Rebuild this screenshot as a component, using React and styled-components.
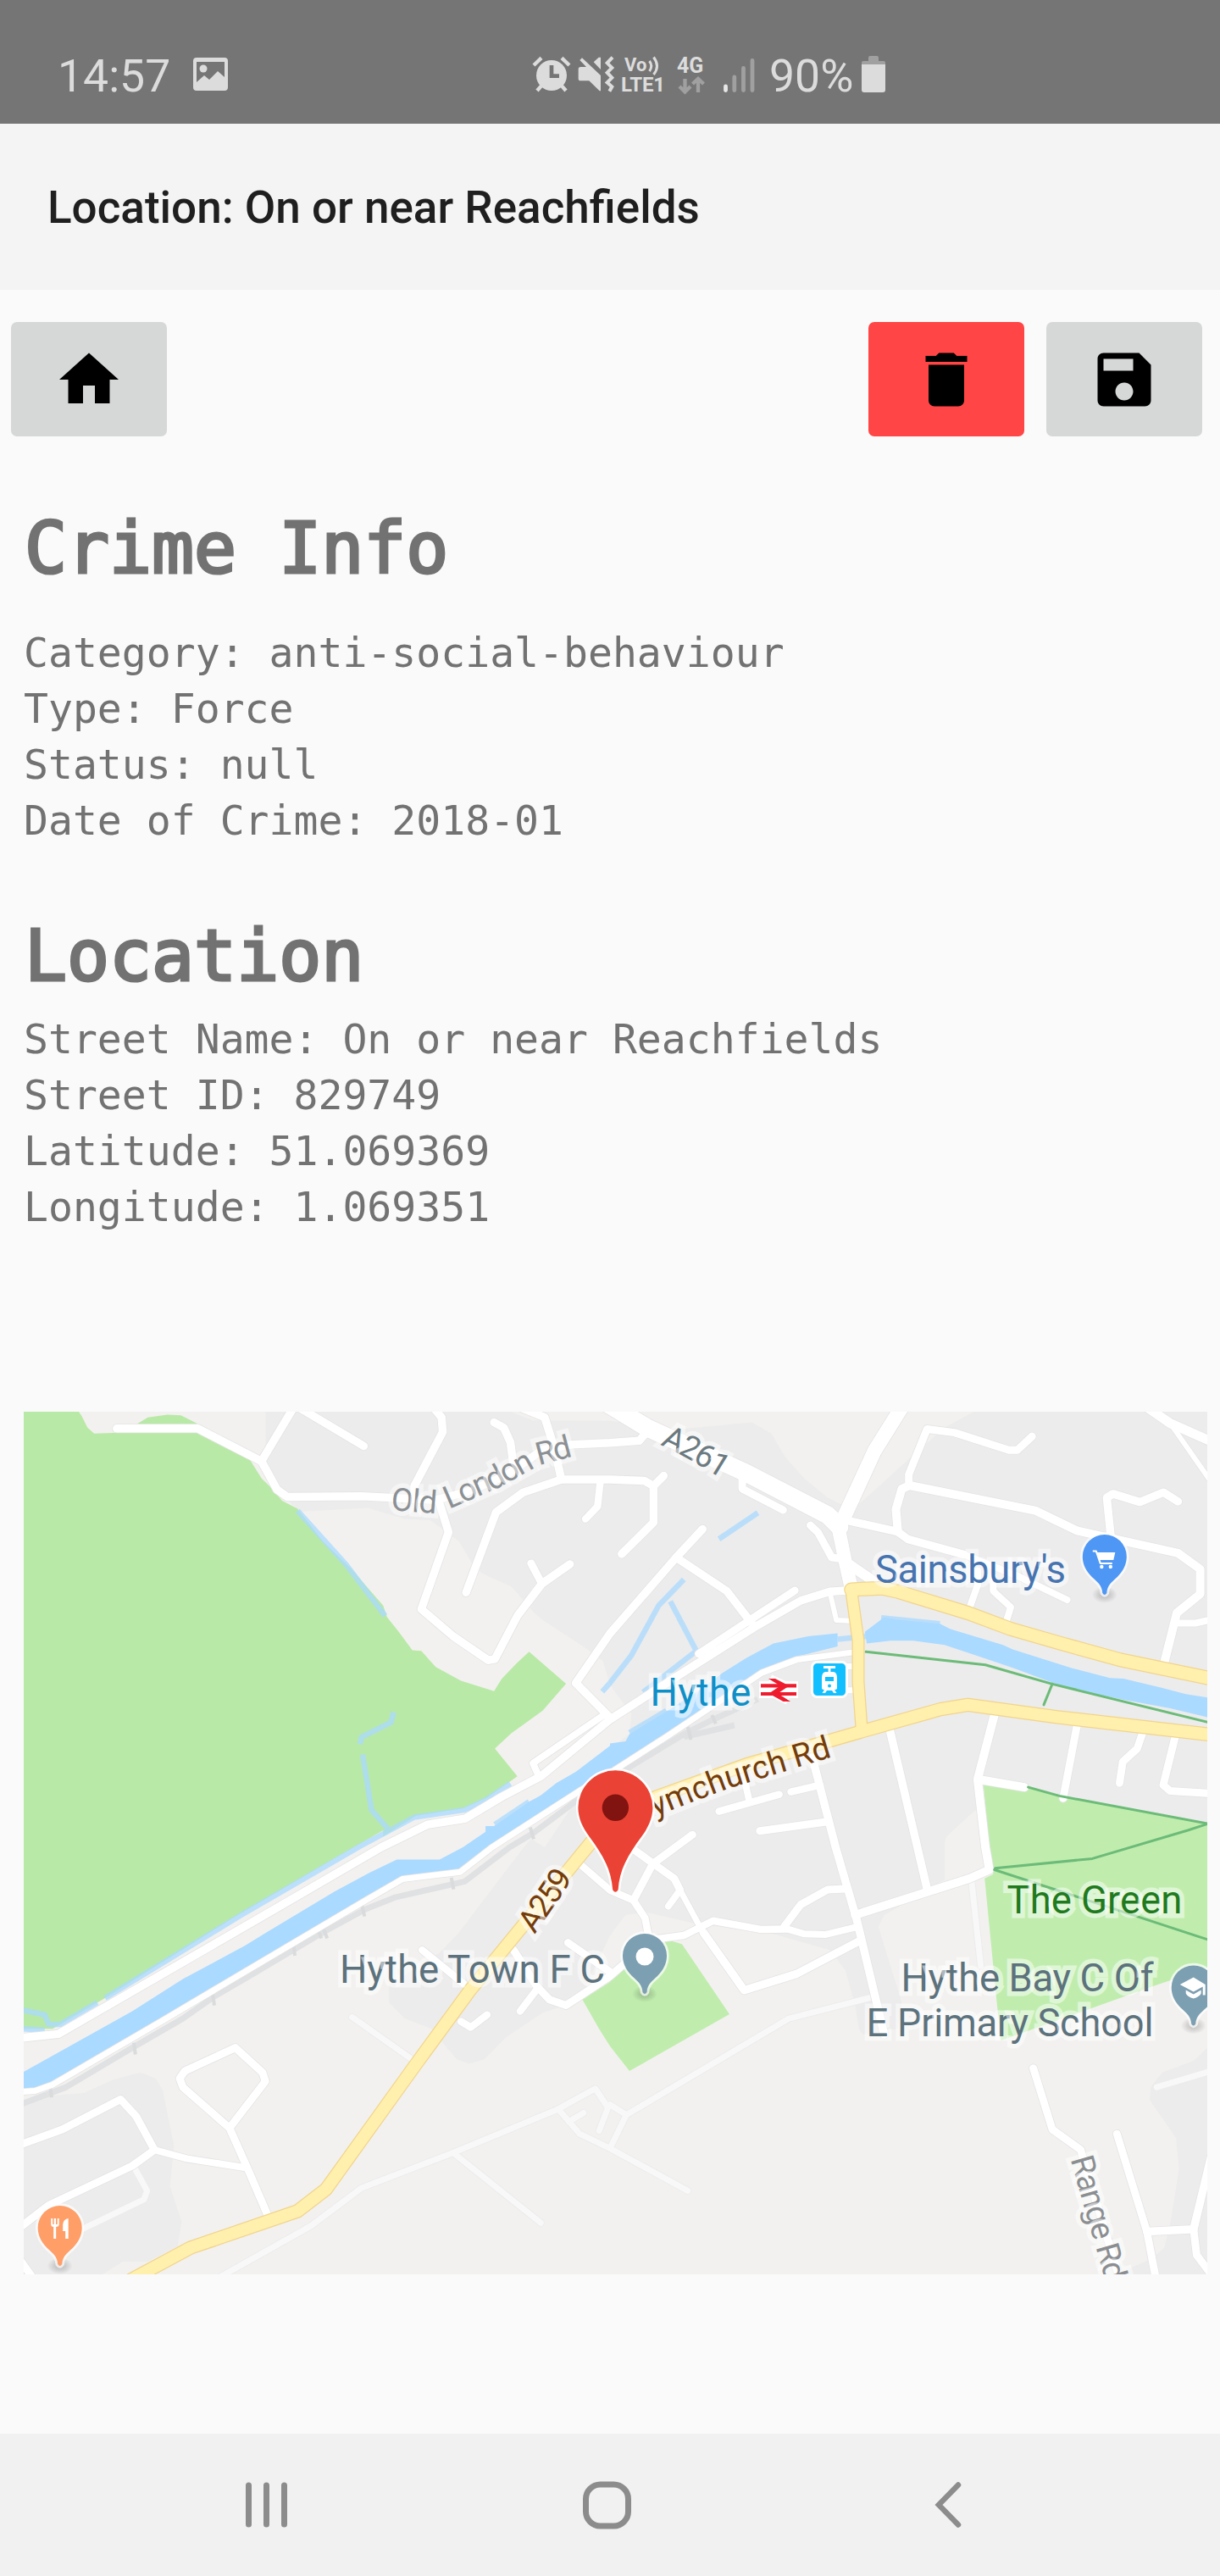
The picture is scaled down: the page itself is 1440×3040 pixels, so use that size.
import React from "react";
import styled, { createGlobalStyle } from "styled-components";

const GlobalStyle = createGlobalStyle`
  body { margin: 0; background: #fafafa; }
  * { box-sizing: border-box; }
  svg { display: block; }
`;

const Screen = styled.div`
  width: 1440px;
  height: 3040px;
  display: flex;
  flex-direction: column;
  background: #fafafa;
  font-family: Roboto, "Liberation Sans", sans-serif;
  overflow: hidden;
`;

const StatusBar = styled.header`
  height: 146px;
  flex: none;
  display: flex;
  align-items: flex-start;
  padding: 66px 0 0 68px;
  background: #757575;
  color: #dcdcdc;
`;

const StatusText = styled.span`
  width: ${(p) => p.$width}px;
  margin-left: ${(p) => p.$gap || 0}px;
  font-size: 53.5px;
  line-height: 47px;
  white-space: nowrap;
`;

const StatusIcon = styled.svg`
  flex: none;
  overflow: visible;
  margin-left: ${(p) => p.$gap}px;
`;

const TitleBar = styled.div`
  height: 196px;
  flex: none;
  display: flex;
  align-items: center;
  padding: 2px 0 0 56px;
  background: #f4f4f4;
`;

const Title = styled.h1`
  margin: 0;
  color: #1f1f1f;
  font-size: 53px;
  font-weight: 500;
  line-height: 62px;
  white-space: nowrap;
`;

const Toolbar = styled.div`
  display: flex;
  gap: 26px;
  padding: 38px 21px 0 13px;
  flex: none;
`;

const ToolButton = styled.button`
  width: 184px;
  height: 135px;
  padding: 0;
  border: 0;
  border-radius: 7px;
  display: flex;
  align-items: center;
  justify-content: center;
  background: ${(p) => (p.$danger ? "#ff4545" : "#d6d8d7")};
  &:first-child { margin-right: auto; }
`;

const Section = styled.section`
  flex: none;
  padding-left: 28px;
  margin-top: ${(p) => p.$top}px;
  color: #727272;
  font-family: "DejaVu Sans Mono", monospace;
`;

const Heading = styled.h2`
  margin: 0 0 ${(p) => p.$gap}px;
  padding-left: 1px;
  font-size: 83.1px;
  line-height: 100px;
  font-weight: 400;
  -webkit-text-stroke: 3.2px #727272;
`;

const Line = styled.p`
  margin: 0;
  font-size: 48.1px;
  line-height: 66px;
  white-space: pre;
`;

const MapFrame = styled.div`
  width: 1397px;
  height: 1018px;
  flex: none;
  margin: 209px 0 0 28px;
  overflow: hidden;
`;

const MapLabel = styled.text`
  font-family: Roboto, sans-serif;
  font-size: ${(p) => p.$size || 45.5}px;
  fill: ${(p) => p.$color};
  stroke: rgba(255, 255, 255, 0.5);
  stroke-width: 11px;
  stroke-linejoin: miter;
  stroke-miterlimit: 2;
  paint-order: stroke;
`;

const NavBar = styled.nav`
  margin-top: auto;
  height: 168px;
  flex: none;
  display: flex;
  align-items: center;
  padding-left: 285px;
  background: #f1f1f1;
`;

const NavIcon = styled.svg`
  flex: none;
  margin-left: ${(p) => p.$gap || 0}px;
`;

/* The map is digitised in four sheets (A B on top, C D below). A point list
   names its sheet by letter and goes on in it until the next letter. */
const SHEETS = { A: [0, 1640], B: [720, 1640], C: [0, 2160], D: [720, 2160] };
const SX = 720 / 1568;
const SY = 540 / 1568;

function trace(list, close) {
  let sheet = SHEETS.A;
  const points = list.trim().split(/\s+/).map((token) => {
    let t = token;
    if (SHEETS[t[0]]) {
      sheet = SHEETS[t[0]];
      t = t.slice(1);
    }
    const [x, y] = t.split(",").map(Number);
    return (sheet[0] + x * SX).toFixed(1) + " " + (sheet[1] + y * SY).toFixed(1);
  });
  return "M" + points.join("L") + (close ? "Z" : "");
}

const URBAN = [
  "A683,70 683,200 672,245 712,342 770,418 945,405 1040,443 1105,447 1140,480 1180,520 1215,600 1240,630 1315,675 1370,760 1390,785 1510,890 1550,930 B0,1010 15,1040 55,1110 50,1180 0,1230 A1480,1410 1400,1568 C1365,30 1345,60 1180,350 1130,420 1000,530 1000,590 1040,645 1110,680 1145,740 1175,785 1205,800 1245,785 1300,710 1395,625 1440,605 1500,550 D0,360 40,290 90,280 220,320 420,355 565,410 605,480 630,600 640,680 650,700 740,680 750,590 690,330 705,290 860,170 860,40 B865,1530 940,1440 965,1350 1540,1487 1540,70",
  "C55,925 140,908 215,900 290,855 360,830 400,850 418,890 447,1080 437,1220 467,1340 457,1425 380,1478 315,1478 260,1525 55,1525",
  "D1540,740 1500,790 1420,830 1390,880 1388,925 1455,1055 1463,1160 1440,1350 1425,1430 1390,1470 1345,1495 1300,1525 1540,1525",
];
const OPEN_LAND =
  "A1305,72 1370,105 1568,107 B0,107 180,135 365,112 415,150 450,230 500,305 560,370 620,410 650,380 770,235 860,130 940,72";
const WOOD = [
  "A55,70 200,70 210,90 225,130 242,150 290,148 510,148 640,235 673,305 700,340 725,380 765,408 830,520 900,610 985,740 995,780 1025,830 1060,893 1083,895 1120,950 1185,997 1270,1033 1290,990 1330,935 1360,898 1455,1008 1395,1100 1315,1177 1272,1230 1330,1325 1250,1400 1190,1435 1070,1460 985,1530 C985,0 830,120 600,300 270,575 135,680 55,680",
  "A352,118 380,95 430,86 465,88 508,117",
];
const PARKS = [
  "D130,380 155,378 185,390 307,630 50,825 0,740 C1540,680 1497,580 1568,520 D20,470",
  "B960,1355 1075,1362 1155,1392 1540,1487 D1540,470 1405,530 1005,720 995,600 963,165 985,150 B975,1568",
];
const RIVERS = [
  "B585,835 510,845 420,870 350,920 290,970 230,1030 160,1090 50,1180 40,1205 0,1212 A1568,1220 1480,1310 1430,1348 1390,1390 1360,1412 1270,1495 1248,1495 1248,1515 1190,1568 C1130,100 1020,100 950,145 860,210 685,350 630,395 470,510 340,620 55,832 55,892 95,887 230,790 300,740 420,640 755,395 930,250 1040,165 1180,135 1340,0 A1490,1375 B10,1305 150,1185 300,1060 400,960 480,915 585,880",
  "B655,830 695,790 705,780 740,788 848,802 875,820 1010,875 1035,890 1190,955 1285,988 1320,990 1420,1022 1480,1043 1540,1056 1540,1124 1440,1092 1330,1065 1180,1025 1040,955 950,915 860,875 780,860 720,860 660,870",
];
const STREAMS = [
  "A765,415 890,600 990,775",
  "A1012,1105 1005,1140 930,1190 925,1215",
  "A932,1250 955,1440 997,1505",
  "A1312,1350 1250,1405 1195,1440 1065,1465 925,1565 C620,290 270,575",
  "C55,615 115,632 125,665 155,665 250,590",
  "C55,680 115,685",
  "A1360,1412 1272,1490",
  "B380,422 280,512",
  "B190,650 125,740 55,910 0,1005 A1548,1035",
  "B155,725 222,895 85,1037",
  "B145,1100 50,1175",
  "B585,855 660,845",
  "B697,782 848,802",
];
const RAIL = [
  "B380,1060 265,1130 190,1180 30,1310 A1480,1410 1370,1520 1310,1568 C1195,175 1015,230 940,270 830,350 640,500 550,570 470,645 340,745 170,880 55,938",
  "B320,1150 190,1190",
];
const SLEEPERS = [
  "A1363,1500 1372,1540", "C1160,162 1166,202", "C930,255 937,295", "C816,336 826,370",
  "C831,336 841,370", "C754,388 758,430", "C546,556 551,600", "C344,728 348,768", "C128,873 133,915",
  "B262,1115 272,1145", "B200,1155 208,1200",
];
const FAINT = [
  "C905,640 1070,795",
  "C560,1535 800,1355 930,1225 1165,1105 1435,955 1530,885 1563,950 1540,1030",
  "C1165,1105 1390,1345",
  "C1435,955 1490,1040 1568,1090 D200,1235",
  "D0,1090 42,975 460,645 680,570",
  "D42,975 0,940",
  "C1462,998 1500,968",
  "D930,180 953,465",
  "D1405,880 1545,825",
  "C345,1155 378,1235 370,1265 190,1380",
];
const ROADS = [
  [9.5, "A300,133 508,133 672,245 712,342 738,367 930,365 1120,378 1200,350 1300,295 1395,205 1470,188 1568,182 B75,175 95,145"],
  [9.5, "A672,245 755,60"],
  [9.5, "A770,62 935,193"],
  [9.5, "A1115,62 1135,95 1138,145 1065,330 1065,375"],
  [9.5, "A1270,112 1295,130 1312,180 1320,260"],
  [9.5, "A1340,62 1400,95 1425,200 1443,308"],
  [9.5, "A1130,390 1153,488 1083,752 1165,845 1255,927 1272,923 1330,775 1393,665 1465,598"],
  [9, "A1365,595 1393,665"],
  [9.5, "A1198,695 1275,420 1345,352 1443,308 1568,308 B88,312 112,330 138,295"],
  [8.5, "A1543,315 1536,400 1505,443"],
  [9.5, "B112,330 112,455 30,563"],
  [9.5, "B238,478 170,575 0,835 A1480,1005 1565,1120"],
  [8, "A1555,1112 1370,1280 1385,1325"],
  [9.5, "B170,575 300,690 370,810"],
  [9, "B475,688 228,905"],
  [21, "B-10,45 95,130 350,285 560,430 590,470"],
  [9, "B340,305 340,340 445,412"],
  [17, "B750,60 680,210 597,450"],
  [16, "B585,460 605,590 622,690"],
  [12, "B600,585 660,640 690,670"],
  [9, "B515,465 535,490 570,575 600,580"],
  [9.5, "B605,447 740,487 765,512 910,565"],
  [8, "B910,565 1050,640 1175,720"],
  [8, "B945,620 945,670 925,745"],
  [8, "B985,640 985,690 1030,745 1020,788"],
  [10, "B740,487 735,410 750,340 770,328 1095,415 1200,483 1460,560 1517,615 1517,700 1457,765 1425,935"],
  [8, "B1455,800 1505,800 1545,788"],
  [9, "B768,328 768,290 815,135 885,147 1025,207 1047,207 1085,160"],
  [9.5, "B1287,500 1277,370 1293,357 1362,385 1423,352 1460,383"],
  [11, "B1380,60 1440,115 1550,180"],
  [6, "B1440,115 1550,325"],
  [9.5, "B610,688 565,692 490,723 370,815 210,950 0,1130 A1390,1325 1290,1395 1195,1470 1100,1490 980,1568 C700,275 150,698 55,711"],
  [7, "B625,900 480,925 390,970 290,1060 150,1185 10,1305 A1490,1375 1265,1568 C1183,143 1035,167 940,240 420,650 135,872 90,893 50,897"],
  [6, "B565,692 582,790 620,792"],
  [7, "B600,948 625,948"],
  [7, "B600,1030 625,1030"],
  [9.5, "B720,1170 790,1568 D815,200"],
  [10, "B990,1105 945,1335 965,1568 D975,135 925,165 630,290"],
  [10, "B945,1335 1065,1362"],
  [9, "B1202,1140 1165,1400"],
  [9, "B1370,1172 1355,1230 1318,1275 1310,1348"],
  [9, "B1453,1188 1422,1355 1440,1375 1545,1384"],
  [9.5, "B520,1260 580,1568 D635,310 705,700"],
  [8.5, "B540,1355 465,1378"],
  [8.5, "B435,1387 280,1445"],
  [8, "B348,1350 358,1410"],
  [9, "B385,1512 560,1480"],
  [9, "D212,15 110,115 60,240"],
  [8.5, "C1490,115 1568,205 D60,240 90,300 98,355"],
  [9, "D60,65 165,165 180,205"],
  [7, "D180,205 245,365"],
  [9.5, "D240,350 345,548 480,492 640,380"],
  [8, "D150,260 180,205"],
  [8.5, "D105,375 190,360 265,310 390,340 455,338"],
  [8, "D455,338 500,355 555,357 630,333"],
  [9, "D445,335 490,255 560,203 605,200"],
  [8.5, "C1085,410 1210,545"],
  [9, "C1320,410 1380,535 1412,580 1455,600 1568,500 D60,430"],
  [8.5, "C1380,545 1337,620"],
  [9, "C1460,385 1568,485"],
  [8.5, "C1185,655 1210,675 1252,632"],
  [9, "C50,1078 160,1025 310,922 350,980 397,1095 340,1150 125,1285 50,1362"],
  [8, "C397,1095 480,1125 635,1157"],
  [9, "C590,1020 470,880 462,850 475,825 605,745 675,830 682,860 590,1020 640,1170 690,1325"],
  [9, "C50,1470 85,1535"],
  [9, "D1088,815 1137,1025 1210,1095 1215,1120 1310,1535"],
  [9, "D1303,1040 1380,1375 1403,1535"],
  [9.5, "D1380,1375 1500,1367 1545,1120"],
  [9, "D1500,1367 1508,1455 1550,1530"],
];
const MAIN_ROADS = [
  [16, "B1545,990 1310,925 1160,870 1030,820 920,765 740,692 700,680 620,685"],
  [14, "B620,685 638,860 638,1000 647,1165"],
  [15.5, "B1545,1182 1150,1122 920,1080 850,1095 650,1170 350,1285 120,1395 20,1465 A1540,1545 C1520,40 1210,545 1070,800 838,1230 765,1305 490,1430 330,1545"],
];
const PATHS = [
  "B658,898 965,943 1135,1008 1545,1142",
  "B1137,1008 1115,1080",
  "B1075,1362 1155,1392 1545,1489",
  "D990,130 1240,97 1485,0 B1545,1484",
  "D988,135 1545,378",
];

const PIN =
  "M-2.5 42C-3 33 -8 29.500 -15 23C-22 16 -26 8 -26 -1A26 26 0 0 1 26 -1C26 8 22 16 15 23C8 29.500 3 33 2.500 42Q0 46 -2.500 42Z";
const MARKER =
  "M-3.200 97C-5 73 -14 57 -31 34C-39 23 -44 12 -44 0A44 44 0 0 1 44 0C44 12 39 23 31 34C14 57 5 73 3.200 97Q0 102 -3.200 97Z";

function PlacePin({ x, y, color, children }) {
  return (
    <g transform={`translate(${x} ${y})`}>
      <ellipse cx="0" cy="44" rx="15" ry="10" fill="url(#pin-shadow)" />
      <path d={PIN} fill={color} stroke="#fff" strokeOpacity=".7" strokeWidth="5.500" paintOrder="stroke" strokeLinejoin="round" />
      {children}
    </g>
  );
}

function StreetMap() {
  return (
    <svg width="1397" height="1018" viewBox="28 1666 1397 1018" fill="none" strokeLinejoin="round" strokeLinecap="round">
      <defs>
        <radialGradient id="pin-shadow">
          <stop offset="0" stopColor="#000" stopOpacity=".22" />
          <stop offset=".5" stopColor="#000" stopOpacity=".12" />
          <stop offset="1" stopColor="#000" stopOpacity="0" />
        </radialGradient>
      </defs>
      <rect x="28" y="1666" width="1397" height="1018" fill="#f2f1ef" />
      {URBAN.map((d) => <path key={d} d={trace(d, true)} fill="#ececec" />)}
      <path d={trace(OPEN_LAND, true)} fill="#f2f1ef" />
      {WOOD.map((d) => <path key={d} d={trace(d, true)} fill="#b9e9a7" />)}
      {PARKS.map((d) => <path key={d} d={trace(d, true)} fill="#c0edae" />)}
      <g stroke="#aadaff" strokeOpacity=".75" strokeWidth="6.500" strokeLinecap="butt">
        {STREAMS.map((d) => <path key={d} d={trace(d)} />)}
      </g>
      {RIVERS.map((d) => <path key={d} d={trace(d, true)} fill="#aadaff" />)}
      <g stroke="#dfe1e2" strokeWidth="7" strokeLinecap="butt">
        {RAIL.map((d) => <path key={d} d={trace(d)} />)}
      </g>
      <g stroke="#d9dbdc" strokeWidth="4" strokeLinecap="butt">
        {SLEEPERS.map((d) => <path key={d} d={trace(d)} />)}
      </g>
      <g stroke="#ececec" strokeWidth="9">
        {FAINT.map((d) => <path key={d} d={trace(d)} />)}
      </g>
      <g stroke="#f8f8f8" strokeWidth="7">
        {FAINT.map((d) => <path key={d} d={trace(d)} />)}
      </g>
      <g stroke="#e4e4e4">
        {ROADS.map(([w, d]) => <path key={d} d={trace(d)} strokeWidth={w + 1.6} />)}
      </g>
      <g stroke="#fff">
        {ROADS.map(([w, d]) => <path key={d} d={trace(d)} strokeWidth={w} />)}
      </g>
      <g stroke="#6cbb78" strokeWidth="3">
        {PATHS.map((d) => <path key={d} d={trace(d)} />)}
      </g>
      <g stroke="#f1d48c">
        {MAIN_ROADS.map(([w, d]) => <path key={d} d={trace(d)} strokeWidth={w + 1} />)}
      </g>
      <g stroke="#fff0ad">
        {MAIN_ROADS.map(([w, d]) => <path key={d} d={trace(d)} strokeWidth={w - 1.5} />)}
      </g>

      <path id="old-london-west" d="M461 1782L530 1787.500" />
      <path id="old-london-east" d="M530 1781L590 1755L637 1729L690 1715" />
      <MapLabel $color="#8b9094" $size={37.5}>
        <textPath href="#old-london-west" textLength="54">Old</textPath>
        <textPath href="#old-london-east" textLength="160">London Rd</textPath>
      </MapLabel>
      <path id="a261" d="M779 1705Q812 1720 853 1746L870 1756" />
      <MapLabel $color="#6b7a80" $size={38}>
        <textPath href="#a261" textLength="83">A261</textPath>
      </MapLabel>
      <MapLabel $color="#733c0a" $size={38} textLength="81" transform="translate(631 2283) rotate(-55.5)">A259</MapLabel>
      <path id="dymchurch" d="M750 2153L806 2131L862 2110L1000 2068" />
      <MapLabel $color="#733c0a" $size={38}>
        <textPath href="#dymchurch" textLength="246">Dymchurch Rd</textPath>
      </MapLabel>
      <MapLabel $color="#8b8e91" $size={38} textLength="151" transform="translate(1263.5 2548) rotate(74)">Range Rd</MapLabel>

      <MapLabel $color="#4674b0" x="1033" y="1868" textLength="225">Sainsbury's</MapLabel>
      <MapLabel $color="#0f8fc7" x="767.500" y="2012.500" textLength="119">Hythe</MapLabel>
      <MapLabel $color="#5c727d" x="401" y="2340" textLength="313">Hythe Town F C</MapLabel>
      <MapLabel $color="#1f7a1f" x="1188.500" y="2258" textLength="207">The Green</MapLabel>
      <MapLabel $color="#5c727d" x="1063.500" y="2350" textLength="298">Hythe Bay C Of</MapLabel>
      <MapLabel $color="#5c727d" x="1022.500" y="2403" textLength="339">E Primary School</MapLabel>

      <g strokeLinecap="butt" strokeLinejoin="miter">
        <path d="M896 1989.300H942M896 1999H942M909 1981L927 1989.500L912 1998L930 2007" stroke="#fff" strokeWidth="10" />
        <path d="M898 1989.300H940M898 1999H940" stroke="#ee1c2e" strokeWidth="4.200" />
        <path d="M907 1981H915L931.500 1989.500L918 1998.500L933 2008H924.500L907.500 1998.500L921 1989.500Z" fill="#ee1c2e" />
      </g>

      <rect x="958.500" y="1961.500" width="41" height="41" rx="6" fill="#12bfff" stroke="#fff" strokeWidth="3" />
      <path d="M972 1967.500H986M979 1968V1974" stroke="#fff" strokeWidth="2.800" strokeLinecap="butt" />
      <path d="M974 1973H984Q988 1974 988 1980V1992Q988 1994 985 1994L987.500 1998H984L982 1995H976L974 1998H970.500L973 1994Q970 1994 970 1992V1980Q970 1974 974 1973Z" fill="#fff" />
      <path d="M974 1979H984V1984H974Z" fill="#12bfff" />
      <circle cx="979" cy="1989.500" r="2" fill="#12bfff" />

      <PlacePin x={1303.8} y={1838} color="#4e97f5">
        <path d="M-14 -7.500H-10L-5 7H9" stroke="#fff" strokeWidth="2.200" strokeLinecap="butt" />
        <path d="M-9.500 -6H12.500L10.500 3H-6Z" fill="#fff" />
        <circle cx="-3.500" cy="11" r="2.200" fill="#fff" />
        <circle cx="7" cy="11" r="2.200" fill="#fff" />
      </PlacePin>
      <PlacePin x={761} y={2309} color="#7c9fb1">
        <circle cx="0" cy="0" r="10.500" fill="#fff" />
      </PlacePin>
      <PlacePin x={1408.7} y={2346.5} color="#7c9fb1">
        <path d="M0 -13L-16 -4.500L0 4L11 -2V8H14V-4.500Z" fill="#fff" />
        <path d="M-9 2L0 7L9 2V6Q7 10 0 12Q-7 10 -9 6Z" fill="#fff" />
      </PlacePin>
      <PlacePin x={70.7} y={2630} color="#ff9e67">
        <path d="M-10.500 -12V-5Q-10.500 -2 -7.500 -2V12H-4.500V-2Q-1 -2 -1 -5V-12H-3V-5H-4.700V-12H-7V-5H-8.500V-12Z" fill="#fff" />
        <path d="M10 -12V12H6.500V3H3.500V-5Q4 -11 10 -12Z" fill="#fff" />
      </PlacePin>

      <g transform="translate(726.400 2133.300)">
        <path d={MARKER} fill="#ea4335" stroke="#fff" strokeWidth="5" paintOrder="stroke" />
        <circle r="15.700" fill="#811411" />
      </g>
    </svg>
  );
}

const CRIME = [
  "Category: anti-social-behaviour",
  "Type: Force",
  "Status: null",
  "Date of Crime: 2018-01",
];
const PLACE = [
  "Street Name: On or near Reachfields",
  "Street ID: 829749",
  "Latitude: 51.069369",
  "Longitude: 1.069351",
];

const ICONS = {
  home: "M10 20v-6h4v6h5v-8h3L12 3 2 12h3v8z",
  trash: "M6 19c0 1.1.9 2 2 2h8c1.100 0 2-.9 2-2V7H6v12zM19 4h-3.500l-1-1h-5l-1 1H5v2h14V4z",
  save: "M17 3H5c-1.110 0-2 .9-2 2v14c0 1.100.89 2 2 2h14c1.100 0 2-.9 2-2V7l-4-4zm-5 16c-1.660 0-3-1.340-3-3s1.340-3 3-3 3 1.340 3 3-1.340 3-3 3zm3-10H5V5h10v4z",
};

function ToolIcon({ name }) {
  return (
    <svg width="84" height="84" viewBox="0 0 24 24"><path d={ICONS[name]} fill="#000" /></svg>
  );
}

export default function App() {
  return (
    <Screen>
      <GlobalStyle />
      <StatusBar>
        <StatusText $width={134}>14:57</StatusText>
        <StatusIcon $gap={26} width="41" height="44" viewBox="0 0 41 44">
          <path fillRule="evenodd" fill="#dcdcdc" d="M4 2H37Q41 2 41 6V37Q41 41 37 41H4Q0 41 0 37V6Q0 2 4 2ZM4 7V31L13 23L19 28L29 18L37 25V7Z" />
          <circle cx="12" cy="15" r="4.500" fill="#dcdcdc" />
        </StatusIcon>
        <StatusIcon $gap={360} width="44" height="46" viewBox="87 198 132 138" fill="none" stroke="#dcdcdc">
          <circle cx="153" cy="267" r="54" fill="#dcdcdc" stroke="none" />
          <path d="M90 231L117 205M216 231L189 205M102 321L122 298M204 321L184 298" strokeWidth="13" />
          <path d="M153 231V269H180" stroke="#757575" strokeWidth="14" />
        </StatusIcon>
        <StatusIcon $gap={9} width="43" height="46" viewBox="246 198 129 138" fill="#dcdcdc">
          <path d="M261 205L327 267V322H323L286 286H256Q248 286 248 278V245Q248 237 256 237H276L253 213Z" />
          <path d="M302 220L320 203H327V246Z" />
          <path d="M369 203L350 223L367 240L350 257L367 275L350 292L367 307L358 323" fill="none" stroke="#dcdcdc" strokeWidth="12" />
        </StatusIcon>
        <StatusIcon $gap={8} width="52" height="46" viewBox="0 0 52 46" fill="#dcdcdc" fontFamily="Roboto, sans-serif" fontWeight="700">
          <text x="4" y="18" fontSize="22">Vo</text>
          <path d="M33.500 6Q38 12 33.500 18M38.500 1.500Q46.500 12 38.500 22" fill="none" stroke="#dcdcdc" strokeWidth="3" />
          <text x="0" y="42" fontSize="24" textLength="52">LTE1</text>
        </StatusIcon>
        <StatusIcon $gap={14} width="34" height="46" viewBox="0 0 34 46" fill="#dcdcdc" fontFamily="Roboto, sans-serif" fontWeight="700">
          <text x="0" y="20" fontSize="25">4G</text>
          <path d="M9.500 27V42M3 36L9.500 42.500L16 36M25 43V28M18.500 33L25 27L31.500 33" fill="none" stroke="#a0a0a0" strokeWidth="4.300" />
        </StatusIcon>
        <StatusIcon $gap={20} width="38" height="46" viewBox="0 0 38 46" fill="none" strokeWidth="4.800" strokeLinecap="round">
          <path d="M3.500 36V40.500" stroke="#e6e6e6" />
          <path d="M13.800 25V40.500M24.500 14.500V40.500M35 5.500V40.500" stroke="#a0a0a0" />
        </StatusIcon>
        <StatusText $gap={17} $width={102}>90%</StatusText>
        <StatusIcon $gap={7} width="28" height="46" viewBox="0 0 28 46">
          <path d="M0 12V8Q0 6 2 6H8V2Q8 0 10 0H18Q20 0 20 2V6H26Q28 6 28 8V12Z" fill="#a0a0a0" />
          <path d="M0 10H28V40Q28 43 25 43H3Q0 43 0 40Z" fill="#dcdcdc" />
        </StatusIcon>
      </StatusBar>

      <TitleBar>
        <Title>Location: On or near Reachfields</Title>
      </TitleBar>

      <Toolbar>
        <ToolButton aria-label="Home"><ToolIcon name="home" /></ToolButton>
        <ToolButton $danger aria-label="Delete"><ToolIcon name="trash" /></ToolButton>
        <ToolButton aria-label="Save"><ToolIcon name="save" /></ToolButton>
      </Toolbar>

      <Section $top={83}>
        <Heading $gap={39}>Crime Info</Heading>
        {CRIME.map((t) => <Line key={t}>{t}</Line>)}
      </Section>
      <Section $top={78}>
        <Heading $gap={14}>Location</Heading>
        {PLACE.map((t) => <Line key={t}>{t}</Line>)}
      </Section>

      <MapFrame><StreetMap /></MapFrame>

      <NavBar>
        <NavIcon width="60" height="60" viewBox="285 2927 60 60" stroke="#8c8c8c" strokeWidth="7" strokeLinecap="round">
          <path d="M293.500 2934V2980M314.500 2934V2980M335.500 2934V2980" />
        </NavIcon>
        <NavIcon $gap={341} width="60" height="60" viewBox="686 2926 60 60" fill="none" stroke="#8c8c8c" strokeWidth="7">
          <rect x="691.500" y="2932" width="50" height="49" rx="17" />
        </NavIcon>
        <NavIcon $gap={351} width="44" height="60" viewBox="1096 2926.500 44 60" fill="none" stroke="#8c8c8c" strokeWidth="6.500" strokeLinecap="round">
          <path d="M1130 2933L1107 2956.500L1130 2980" />
        </NavIcon>
      </NavBar>
    </Screen>
  );
}
